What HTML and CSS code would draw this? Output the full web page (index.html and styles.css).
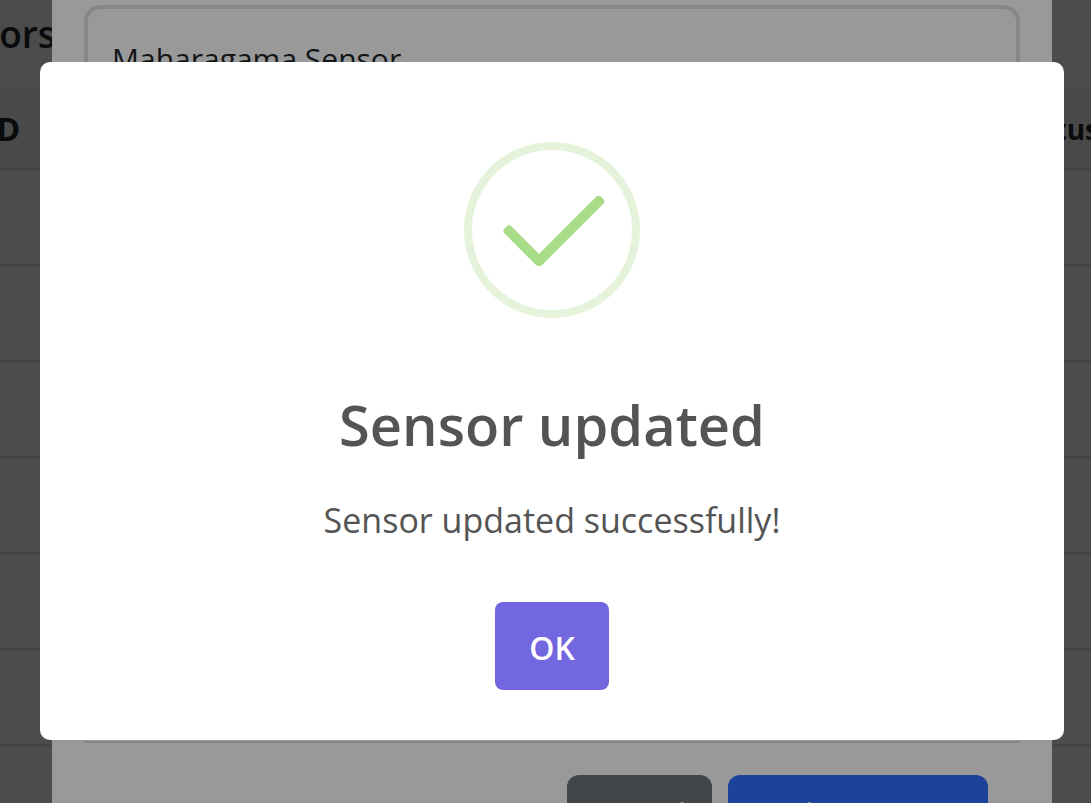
FILE: index.html
```html
<!DOCTYPE html>
<html lang="en">
<head>
<meta charset="utf-8">
<title>Sensors</title>
<link rel="stylesheet" href="styles.css">
</head>
<body>
<main class="page">
  <h1 class="page-title">Sensors</h1>
  <table class="sensor-table">
    <thead><tr><th>ID</th><th class="status">Status</th></tr></thead>
    <tbody>
      <tr><td></td><td></td></tr>
      <tr><td></td><td></td></tr>
      <tr><td></td><td></td></tr>
      <tr><td></td><td></td></tr>
      <tr><td></td><td></td></tr>
      <tr><td></td><td></td></tr>
      <tr><td></td><td></td></tr>
    </tbody>
  </table>
</main>
<div class="layer form-layer">
  <form class="form-dialog">
    <div class="form-body">
      <input class="field" type="text" aria-label="Sensor name" value="Maharagama Sensor">
    </div>
    <div class="form-footer">
      <button class="btn btn-cancel" type="button">Cancel</button>
      <button class="btn btn-update" type="button">Update Sensor</button>
    </div>
  </form>
</div>
<div class="layer alert-layer">
  <section class="alert" role="dialog" aria-modal="true" aria-labelledby="alert-title">
    <svg class="alert-icon" viewBox="0 0 176 176" aria-hidden="true">
      <circle cx="88" cy="88" r="84" fill="none" stroke="#e5f3db" stroke-width="8"/>
      <g fill="#a8dc86">
        <rect x="34" y="98.5" width="51" height="10" rx="4" transform="rotate(45 59.5 103.5)"/>
        <rect x="58" y="84" width="94" height="10" rx="4" transform="rotate(-45 105 89)"/>
      </g>
    </svg>
    <h2 class="alert-title" id="alert-title">Sensor updated</h2>
    <p class="alert-text">Sensor updated successfully!</p>
    <button class="alert-ok" type="button">OK</button>
  </section>
</div>
</body>
</html>
```
FILE: styles.css
```css
* { box-sizing: border-box; }

body {
  margin: 0;
  height: 100vh;
  overflow: hidden;
  background: #fff;
  color: #212529;
  font-family: "Open Sans", "Noto Sans", sans-serif;
}

.page {
  width: calc(100% + 128px);
  margin-left: -96px;
}

.page-title {
  margin: 0;
  padding: 6px 0 26px 12px;
  font-size: 37px;
  line-height: 56px;
  font-weight: 600;
}

.sensor-table {
  width: 100%;
  border-collapse: collapse;
}

.sensor-table th {
  height: 81px;
  padding: 0 24px 0 82px;
  background: #f3f3f3;
  border-bottom: 2px solid #dfdfdf;
  font-size: 32px;
  font-weight: 700;
  text-align: left;
}

.sensor-table .status {
  padding-top: 2px;
  text-align: right;
  font-size: 28px;
}

.sensor-table td {
  height: 96px;
  padding: 0;
  border-bottom: 2px solid #dfdfdf;
}

.layer {
  position: fixed;
  inset: 0;
  overflow: hidden;
}

.form-layer {
  padding: 0 39px 0 52px;
  background: rgba(0, 0, 0, 0.5);
}

.form-dialog {
  padding: 0 32px;
  background: #fff;
}

.form-body {
  min-height: 743px;
  padding-top: 5px;
  border-bottom: 2px solid #dee2e6;
}

.field {
  display: block;
  width: 100%;
  height: 106px;
  padding: 0 24px;
  border: 4px solid #dfdfdf;
  border-radius: 16px;
  background: #fff;
  color: #212529;
  font: 400 30px/40px "Open Sans", "Noto Sans", sans-serif;
}

.form-footer {
  display: flex;
  justify-content: flex-end;
  gap: 16px;
  padding: 32px;
}

.btn {
  height: 76px;
  padding: 0 24px;
  border: 0;
  border-radius: 12px;
  color: #fff;
  font: 400 30px/40px "Open Sans", "Noto Sans", sans-serif;
}

.btn-cancel { min-width: 145px; background: #6c757a; }
.btn-update { min-width: 260px; background: #306eff; }

.alert-layer {
  padding: 62px 27px 0 40px;
  background: rgba(0, 0, 0, 0.4);
}

.alert {
  display: flex;
  flex-direction: column;
  align-items: center;
  padding: 80px 32px 50px;
  border-radius: 10px;
  background: #fff;
  color: #545454;
}

.alert-icon {
  width: 176px;
  height: 176px;
}

.alert-title {
  margin: 66px 0 0;
  font-size: 56px;
  line-height: 80px;
  font-weight: 600;
}

.alert-text {
  margin: 32px 0 0;
  font-size: 34px;
  line-height: 48px;
}

.alert-ok {
  min-width: 114px;
  height: 88px;
  margin-top: 58px;
  padding-top: 4px;
  border: 0;
  border-radius: 8px;
  background: #7367e0;
  color: #fff;
  font: 600 32px/40px "Open Sans", "Noto Sans", sans-serif;
}
```
